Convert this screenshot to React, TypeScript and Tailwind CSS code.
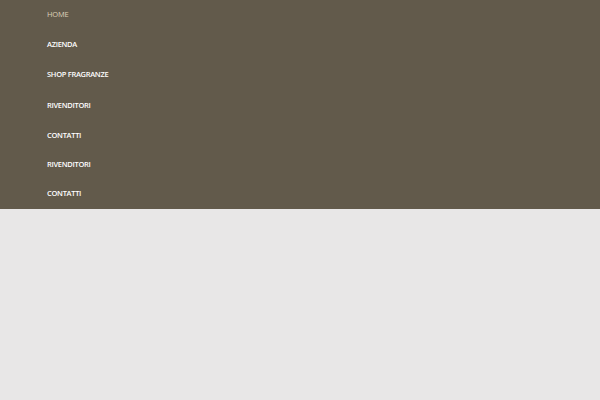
const items = [
  { label: 'HOME', active: true, h: 'h-[30px]' },
  { label: 'AZIENDA', active: false, h: 'h-[30px]' },
  { label: 'SHOP FRAGRANZE', active: false, h: 'h-[30px]' },
  { label: 'RIVENDITORI', active: false, h: 'h-[31px]' },
  { label: 'CONTATTI', active: false, h: 'h-[29px]' },
  { label: 'RIVENDITORI', active: false, h: 'h-[29px]' },
  { label: 'CONTATTI', active: false, h: 'h-[30px]' },
];

export default function App() {
  return (
    <div className="w-[600px] h-[400px] bg-[#e8e7e7] font-['Open_Sans',sans-serif]">
      <nav className="bg-[#625a4b] h-[209px] pl-[47px]">
        <ul className="flex flex-col">
          {items.map((item, i) => (
            <li key={i} className={`${item.h} flex items-center`}>
              <a
                href="#"
                className={
                  item.active
                    ? 'text-[7.5px] leading-none tracking-[-0.2px] text-[#ddd0b8]'
                    : 'text-[7.5px] leading-none tracking-[-0.3px] font-semibold text-white'
                }
              >
                {item.label}
              </a>
            </li>
          ))}
        </ul>
      </nav>
    </div>
  );
}
